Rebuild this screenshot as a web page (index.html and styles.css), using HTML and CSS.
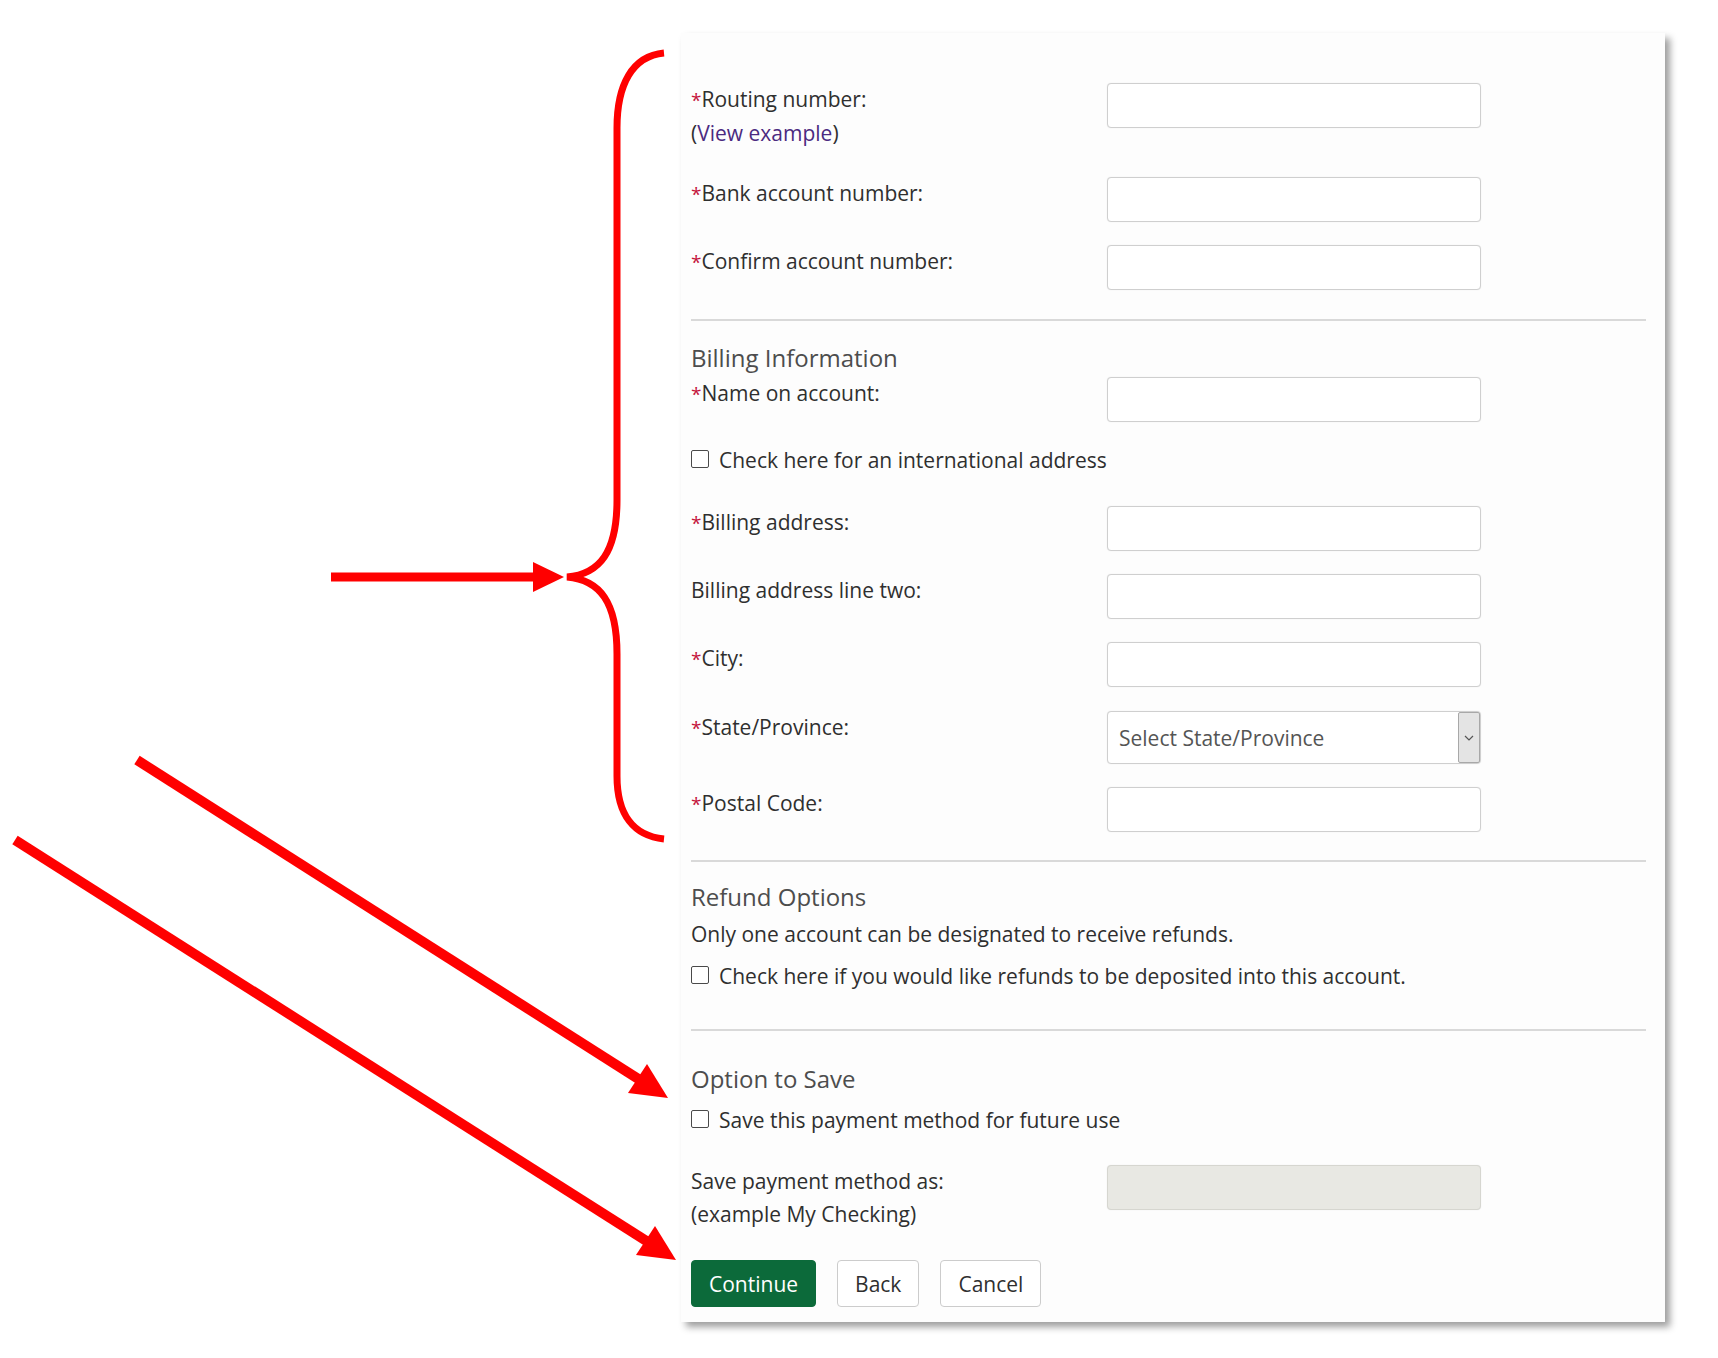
FILE: index.html
```html
<!DOCTYPE html>
<html lang="en">
<head>
<meta charset="utf-8">
<title>Payment method</title>
<link rel="stylesheet" href="styles.css">
</head>
<body>
<div class="stage">
  <div class="panel">
    <div class="row row-tall">
      <div class="label"><span class="req">*</span>Routing number:<br>(<a class="link" href="#">View example</a>)</div>
      <div class="input"></div>
    </div>
    <div class="row">
      <div class="label"><span class="req">*</span>Bank account number:</div>
      <div class="input"></div>
    </div>
    <div class="row row-last">
      <div class="label"><span class="req">*</span>Confirm account number:</div>
      <div class="input"></div>
    </div>

    <hr class="divider divider-1">

    <h2 class="heading heading-billing">Billing Information</h2>
    <div class="row row-name">
      <div class="label"><span class="req">*</span>Name on account:</div>
      <div class="input"></div>
    </div>
    <label class="check check-intl"><span class="box"></span>Check here for an international address</label>
    <div class="row">
      <div class="label"><span class="req">*</span>Billing address:</div>
      <div class="input"></div>
    </div>
    <div class="row">
      <div class="label">Billing address line two:</div>
      <div class="input"></div>
    </div>
    <div class="row row-city">
      <div class="label"><span class="req">*</span>City:</div>
      <div class="input"></div>
    </div>
    <div class="row">
      <div class="label"><span class="req">*</span>State/Province:</div>
      <div class="select">
        <span class="select-text">Select State/Province</span>
        <span class="select-btn"><svg width="10" height="6" viewBox="0 0 10 6"><path d="M1 1 L5 5 L9 1" fill="none" stroke="#555" stroke-width="1.2"/></svg></span>
      </div>
    </div>
    <div class="row row-last">
      <div class="label"><span class="req">*</span>Postal Code:</div>
      <div class="input"></div>
    </div>

    <hr class="divider divider-2">

    <h2 class="heading heading-refund">Refund Options</h2>
    <p class="note">Only one account can be designated to receive refunds.</p>
    <label class="check check-refund"><span class="box"></span>Check here if you would like refunds to be deposited into this account.</label>

    <hr class="divider divider-3">

    <h2 class="heading heading-save">Option to Save</h2>
    <label class="check check-save"><span class="box"></span>Save this payment method for future use</label>
    <div class="row row-save">
      <div class="label">Save payment method as:<br>(example My Checking)</div>
      <div class="input input-disabled"></div>
    </div>

    <div class="actions">
      <button class="btn btn-primary" type="button">Continue</button>
      <button class="btn" type="button">Back</button>
      <button class="btn" type="button">Cancel</button>
    </div>
  </div>

  <svg class="annot" width="1718" height="1358" viewBox="0 0 1718 1358">
    <path d="M664,53 C632,56 617,85 617,128 L617,500 C617,552 600,574 567,577 C600,580 617,602 617,654 L617,776 C617,815 634,836 664,839" fill="none" stroke="#ff0000" stroke-width="7"/>
    <line x1="331" y1="577" x2="536" y2="577" stroke="#ff0000" stroke-width="9"/>
    <polygon points="533,562 564,577 533,592" fill="#ff0000"/>
    <line x1="137" y1="760" x2="640" y2="1080" stroke="#ff0000" stroke-width="10"/>
    <polygon points="668,1098 628,1093 647,1064" fill="#ff0000"/>
    <line x1="15" y1="840" x2="648" y2="1242" stroke="#ff0000" stroke-width="10"/>
    <polygon points="676,1260 636,1255 655,1226" fill="#ff0000"/>
  </svg>
</div>
</body>
</html>
```

FILE: styles.css
```css
html, body {
  margin: 0;
  padding: 0;
  background: #ffffff;
}

.stage {
  position: relative;
  width: 1718px;
  height: 1358px;
  overflow: hidden;
  font-family: "Open Sans", "Noto Sans", sans-serif;
  font-size: 21px;
  color: #2f2f2f;
}

.panel {
  box-sizing: border-box;
  margin-left: 681px;
  margin-top: 33px;
  width: 984px;
  height: 1289px;
  padding: 50px 0 0 10px;
  background: #fdfdfd;
  box-shadow: 5px 5px 7px rgba(0, 0, 0, 0.38);
  display: flow-root;
}

.row {
  display: grid;
  grid-template-columns: 416px 374px;
  align-items: start;
  margin-bottom: 23px;
}

.row-tall { margin-bottom: 27px; }
.row-last { margin-bottom: 0; }
.row-city { margin-bottom: 24px; }
.row-name { margin-bottom: 0; }
.row-save { margin-bottom: 0; }

.label {
  line-height: 33px;
  white-space: nowrap;
}

.req {
  color: #c4143c;
  font-size: 19px;
}

.link {
  color: #4b2a80;
  text-decoration: none;
}

.input {
  box-sizing: border-box;
  height: 45px;
  border: 1px solid #cfcfcf;
  border-radius: 4px;
  background: #ffffff;
  box-shadow: 0 0 1px rgba(0, 0, 0, 0.12);
}

.input-disabled {
  background: #e8e8e3;
  border-color: #d6d6d0;
}

.select {
  box-sizing: border-box;
  height: 53px;
  border: 1px solid #cfcfcf;
  border-radius: 4px;
  background: #ffffff;
  display: flex;
  align-items: stretch;
  box-shadow: 0 0 1px rgba(0, 0, 0, 0.12);
}

.select-text {
  flex: 1;
  display: flex;
  align-items: center;
  padding-left: 11px;
  color: #555555;
}

.select-btn {
  box-sizing: border-box;
  width: 22px;
  background: #e4e4e4;
  border: 1px solid #a8a8a8;
  border-radius: 2px;
  display: flex;
  align-items: center;
  justify-content: center;
}

.divider {
  border: 0;
  border-top: 2px solid #d9d9d9;
  margin: 0;
  width: 955px;
}

.divider-1 { margin-top: 29px; }
.divider-2 { margin-top: 28px; }
.divider-3 { margin-top: 36px; }

.heading {
  margin: 0;
  font-size: 24px;
  font-weight: 400;
  line-height: 32px;
  color: #4d4d4d;
}

.heading-billing { margin-top: 21px; margin-bottom: 3px; }
.heading-refund { margin-top: 19px; }
.heading-save { margin-top: 32px; }

.note {
  margin: 5px 0 0 0;
  line-height: 33px;
}

.check {
  display: flex;
  align-items: center;
  line-height: 33px;
  white-space: nowrap;
}

.box {
  box-sizing: border-box;
  width: 18px;
  height: 18px;
  border: 1.5px solid #4a4a4a;
  border-radius: 2px;
  background: #ffffff;
  margin-right: 10px;
  margin-top: -3px;
  flex: none;
}

.check-intl { margin-top: 22px; margin-bottom: 29px; }
.check-refund { margin-top: 9px; }
.check-save { margin-top: 9px; margin-bottom: 28px; }

.actions {
  display: flex;
  gap: 21px;
  margin-top: 29px;
}

.btn {
  box-sizing: border-box;
  height: 47px;
  padding: 0 17px;
  font-family: inherit;
  font-size: 21px;
  color: #2f2f2f;
  background: #ffffff;
  border: 1px solid #cccccc;
  border-radius: 4px;
}

.btn-primary {
  background: #0c6a3a;
  border-color: #0c6a3a;
  color: #ffffff;
}

.annot {
  position: absolute;
  left: 0;
  top: 0;
  pointer-events: none;
}
```
